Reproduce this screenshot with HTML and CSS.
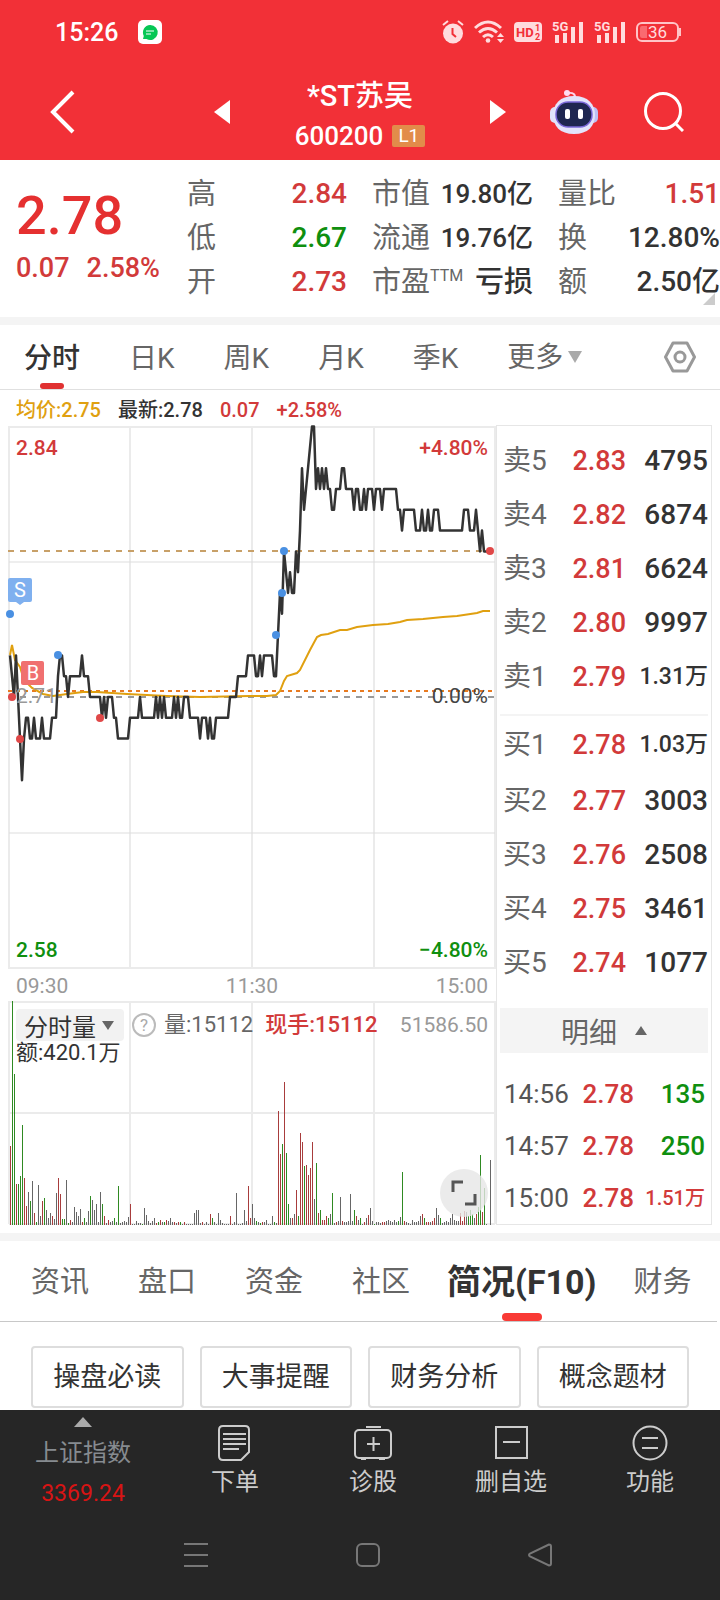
FILE: index.html
```html
<!DOCTYPE html>
<html lang="zh-CN">
<head>
    <meta charset="UTF-8">
    <meta name="viewport" content="width=device-width, initial-scale=1.0">
    <title>*ST苏吴 600200</title>
    <link rel="stylesheet" href="styles.css">
</head>
<body>
    <!-- Header -->
    <header class="header">
        <div class="status">
            <span class="status-time">15:26</span>
            <svg width="24" height="24" viewBox="0 0 24 24"><rect width="24" height="24" rx="5" fill="#fff"/><path d="M12 5a7.500 7.500 0 1 1-3.500 14L5 19l.8-3A7.500 7.500 0 0 1 12 5z" fill="#06c755"/><path d="M8 11h8M8 14h5" stroke="#fff" stroke-width="1.200"/></svg>
            <div class="status-icons">
                <svg width="22" height="24" viewBox="0 0 22 24"><circle cx="11" cy="13.500" r="10" fill="#ffdcde"/><path d="M1 5l5-4M21 5l-5-4" stroke="#ffdcde" stroke-width="2"/><path d="M10.500 8v6l3.500 3" fill="none" stroke="#f23037" stroke-width="2"/></svg>
                <svg width="30" height="24" viewBox="0 0 30 24"><g fill="none" stroke="#ffdcde" stroke-width="3"><path d="M1 8q13-12 26 0"/><path d="M5 12.500q9-8 18 0"/><path d="M9 17q5-4.500 10 0"/></g><circle cx="14" cy="20.500" r="2.300" fill="#ffdcde"/><path d="M23 17l3.500-4 3.500 4zM23 19l3.500 4 3.500-4z" fill="#ffdcde"/></svg>
                <svg width="28" height="20" viewBox="0 0 28 20"><rect width="28" height="20" rx="4" fill="#ffdcde"/><g fill="#f23037" font-weight="700"><text x="2" y="15" font-size="13">HD</text><text x="21" y="9" font-size="9">1</text><text x="21" y="18" font-size="9">2</text></g></svg>
                <svg width="32" height="24" viewBox="0 0 32 24" fill="#ffdcde"><text x="0" y="11" font-size="13" font-weight="700">5G</text><path d="M3 15h4v8H3zM11 13h4v10h-4zM19 7h4v16h-4zM27 2h4v21h-4z"/></svg>
                <svg width="32" height="24" viewBox="0 0 32 24" fill="#ffdcde"><text x="0" y="11" font-size="13" font-weight="700">5G</text><path d="M3 15h4v8H3zM11 13h4v10h-4zM19 7h4v16h-4zM27 2h4v21h-4z"/></svg>
                <svg width="45" height="20" viewBox="0 0 45 20"><rect x="1" y="1" width="41" height="18" rx="5" fill="none" stroke="#ffc4c7" stroke-width="2"/><path d="M6 4h5v12H6a2 2 0 0 1-2-2V6a2 2 0 0 1 2-2z" fill="#fa6a70"/><path d="M44 6v8" stroke="#ffc4c7" stroke-width="2"/><text x="12" y="16" font-size="17" fill="#ffdcde">36</text></svg>
            </div>
        </div>
        <div class="title-bar">
            <button class="icon-btn" aria-label="返回"><svg width="28" height="44" viewBox="0 0 28 44"><path d="M24 2L4 22l20 20" fill="none" stroke="#fff" stroke-width="4"/></svg></button>
            <button class="icon-btn prev" aria-label="上一只"><svg width="16" height="24" viewBox="0 0 16 24"><path d="M16 0v24L0 12z" fill="#fff"/></svg></button>
            <div class="title">
                <h1>*ST苏吴</h1>
                <div class="code">600200 <span class="level">L1</span></div>
            </div>
            <button class="icon-btn next" aria-label="下一只"><svg width="16" height="24" viewBox="0 0 16 24"><path d="M0 0v24l16-12z" fill="#fff"/></svg></button>
            <button class="icon-btn" aria-label="智能助手">
                <svg width="48" height="46" viewBox="0 0 48 46">
                    <path d="M18 4q8-1 7 6" fill="none" stroke="#ffd3ea" stroke-width="2"/><circle cx="17" cy="4" r="3" fill="#ffdcf0"/>
                    <rect x="0" y="18" width="10" height="16" rx="5" fill="#dfe2fa"/><rect x="38" y="18" width="10" height="16" rx="5" fill="#bcc0f4"/>
                    <path d="M24 7C38 7 45 15 45 26S38 45 24 45 3 37 3 26 10 7 24 7z" fill="#e3e3fb"/>
                    <rect x="6" y="13" width="36" height="25" rx="12" fill="#1e2650" stroke="#7a68d8" stroke-width="1.500"/>
                    <rect x="15" y="20" width="5" height="10" rx="2" fill="#fff"/><rect x="28" y="20" width="5" height="10" rx="2" fill="#fff"/>
                </svg>
            </button>
            <button class="icon-btn" aria-label="搜索"><svg width="40" height="40" viewBox="0 0 40 40"><g fill="none" stroke="#fff" stroke-width="3"><circle cx="19" cy="19" r="17.500"/><path d="M31 31l8 8"/></g></svg></button>
        </div>
    </header>

    <!-- Quote -->
    <section class="quote">
        <div class="last">
            <div class="last-price">2.78</div>
            <div class="last-change"><span>0.07</span><span>2.58%</span></div>
        </div>
        <dl class="facts">
            <div><dt>高</dt><dd class="up">2.84</dd></div>
            <div><dt>低</dt><dd class="down">2.67</dd></div>
            <div><dt>开</dt><dd class="up">2.73</dd></div>
        </dl>
        <dl class="facts cap">
            <div><dt>市值</dt><dd>19.80亿</dd></div>
            <div><dt>流通</dt><dd>19.76亿</dd></div>
            <div><dt>市盈<sup>TTM</sup></dt><dd class="loss">亏损</dd></div>
        </dl>
        <dl class="facts">
            <div><dt>量比</dt><dd class="up">1.51</dd></div>
            <div><dt>换</dt><dd>12.80%</dd></div>
            <div><dt>额</dt><dd>2.50亿</dd></div>
        </dl>
    </section>

    <!-- Period tabs -->
    <nav class="periods">
        <a href="#" class="active">分时</a>
        <a href="#">日K</a>
        <a href="#">周K</a>
        <a href="#">月K</a>
        <a href="#">季K</a>
        <a href="#" class="more">更多<svg width="16" height="12" viewBox="0 0 16 12"><path d="M1 0h14l-7 12z" fill="#aaa"/></svg></a>
        <button class="icon-btn settings" aria-label="设置"><svg width="32" height="32" viewBox="0 0 32 32"><g fill="none" stroke="#999" stroke-width="3"><path d="M9 2h14l7.500 14L23 30H9L1.500 16z" stroke-linejoin="round"/><circle cx="16" cy="16" r="5"/></g></svg></button>
    </nav>

    <div class="legend">
        <span class="avg">均价:2.75</span>
        <span>最新:2.78</span>
        <span class="up">0.07</span>
        <span class="up">+2.58%</span>
    </div>

    <main class="board">
        <div class="charts">
            <svg class="price-chart" viewBox="0 0 496 544">
                <g class="grid">
                    <path d="M9 2H495V543H9zM130 2V543M252 2V543M374 2V543"/>
                    <path d="M9 137H495M9 408H495" class="thin"/>
                </g>
                <path d="M8 126H486" class="dash tan"/>
                <path d="M8 272H494" class="dash gray"/>
                <path d="M8 266H492" class="dash orange"/>
                <polyline class="avg-line" points="10,230 12,220 15,235 20,242 24,255 32,263 43,269 53,271 67,269 83,267 97,267 127,269 167,271 200,272 250,271 267,271 276,270 280,266 284,256 287,251 297,248 300,245 310,225 317,212 321,210 328,209 340,205 347,205 357,202 373,200 388,199 400,197 407,195 423,194 443,192 457,191 477,188 483,186 490,186"/>
                <polyline class="price-line" id="priceLine"/>
                <g class="buy">
                    <circle cx="12" cy="272" r="4"/><circle cx="20" cy="314" r="4"/><circle cx="100" cy="293" r="4"/><circle cx="490" cy="126" r="4"/>
                </g>
                <g class="sell">
                    <circle cx="10" cy="189" r="4"/><circle cx="58" cy="230" r="4"/><circle cx="276" cy="210" r="4"/><circle cx="282" cy="168" r="4"/><circle cx="284" cy="126" r="4"/>
                </g>
                <path d="M10 153h20q2 0 2 2v20q0 2-2 2h-6l-4 3-4-3h-6q-2 0-2-2v-20q0-2 2-2z" class="tag-s"/>
                <rect x="21" y="236" width="23" height="24" rx="2" class="tag-b"/>
                <text x="20" y="172" class="tag-text">S</text>
                <text x="33" y="255" class="tag-text">B</text>
                <text x="16" y="30" class="up">2.84</text>
                <text x="488" y="30" class="up end">+4.80%</text>
                <text x="16" y="278" class="base">2.71</text>
                <text x="488" y="278" class="zero end">0.00%</text>
                <text x="16" y="532" class="down">2.58</text>
                <text x="488" y="532" class="down end">−4.80%</text>
            </svg>
            <div class="axis"><span>09:30</span><span>11:30</span><span>15:00</span></div>
            <div class="volume">
                <svg class="volume-chart" viewBox="0 0 496 224">
                    <path d="M9 0V223M130 0V223M252 0V223M374 0V223M495 0V223M9 1H495M9 112H495M9 223H495" class="grid"/>
                    <g id="volumeBars"></g>
                </svg>
                <div class="volume-info">
                    <button class="indicator">分时量<svg width="12" height="9" viewBox="0 0 12 9"><path d="M0 0h12L6 9z" fill="#666"/></svg></button>
                    <button class="icon-btn help" aria-label="帮助">?</button>
                    <span>量:15112</span>
                    <span class="up hand">现手:15112</span>
                    <span class="peak">51586.50</span>
                </div>
                <div class="amount">额:420.1万</div>
                <button class="icon-btn expand" aria-label="全屏"><svg width="26" height="26" viewBox="0 0 26 26"><path d="M2 12V2h10M24 14v10H14" fill="none" stroke="#555" stroke-width="3"/></svg></button>
            </div>
        </div>

        <!-- Order book -->
        <aside class="book">
            <table class="orders asks">
                <tr><th>卖5</th><td class="up">2.83</td><td>4795</td></tr>
                <tr><th>卖4</th><td class="up">2.82</td><td>6874</td></tr>
                <tr><th>卖3</th><td class="up">2.81</td><td>6624</td></tr>
                <tr><th>卖2</th><td class="up">2.80</td><td>9997</td></tr>
                <tr><th>卖1</th><td class="up">2.79</td><td class="wan">1.31万</td></tr>
            </table>
            <table class="orders bids">
                <tr><th>买1</th><td class="up">2.78</td><td class="wan">1.03万</td></tr>
                <tr><th>买2</th><td class="up">2.77</td><td>3003</td></tr>
                <tr><th>买3</th><td class="up">2.76</td><td>2508</td></tr>
                <tr><th>买4</th><td class="up">2.75</td><td>3461</td></tr>
                <tr><th>买5</th><td class="up">2.74</td><td>1077</td></tr>
            </table>
            <button class="detail">明细<svg width="12" height="9" viewBox="0 0 12 9"><path d="M0 9h12L6 0z" fill="#666"/></svg></button>
            <table class="ticks">
                <tr><th>14:56</th><td class="up">2.78</td><td class="down">135</td></tr>
                <tr><th>14:57</th><td class="up">2.78</td><td class="down">250</td></tr>
                <tr><th>15:00</th><td class="up">2.78</td><td class="up wan">1.51万</td></tr>
            </table>
        </aside>
    </main>

    <!-- Info tabs -->
    <nav class="info-tabs">
        <a href="#">资讯</a>
        <a href="#">盘口</a>
        <a href="#">资金</a>
        <a href="#">社区</a>
        <a href="#" class="active">简况(F10)</a>
        <a href="#">财务</a>
    </nav>
    <div class="shortcuts">
        <button>操盘必读</button>
        <button>大事提醒</button>
        <button>财务分析</button>
        <button>概念题材</button>
    </div>

    <!-- Bottom bar -->
    <footer class="footer">
        <div class="tools">
            <a href="#" class="index">
                <svg width="18" height="10" viewBox="0 0 18 10"><path d="M0 10h18L9 0z" fill="#aaa"/></svg>
                <span>上证指数</span>
                <span class="index-value">3369.24</span>
            </a>
            <a href="#" class="tool">
                <svg width="36" height="38" viewBox="0 0 36 38"><path d="M6 2h22q4 0 4 4v22l-8 8H6q-4 0-4-4V6q0-4 4-4zM6 10h23M6 15h23M6 20h23M6 25h16"/></svg>
                下单
            </a>
            <a href="#" class="tool">
                <svg width="38" height="38" viewBox="0 0 38 38"><rect x="1" y="6" width="36" height="28" rx="4"/><path d="M12 3h15M7 35h5M25 35h6M13 20h13M19.500 13v14"/></svg>
                诊股
            </a>
            <a href="#" class="tool">
                <svg width="34" height="38" viewBox="0 0 34 38"><rect x="2" y="3" width="31" height="31"/><path d="M9 18h17"/></svg>
                删自选
            </a>
            <a href="#" class="tool">
                <svg width="36" height="38" viewBox="0 0 36 38"><circle cx="18" cy="19" r="16.500"/><path d="M10 14h16M10 24h16"/></svg>
                功能
            </a>
        </div>
        <div class="system">
            <button class="icon-btn" aria-label="菜单"><svg width="24" height="26" viewBox="0 0 24 26"><path d="M0 2h24M0 13h24M0 24h24"/></svg></button>
            <button class="icon-btn" aria-label="主屏幕"><svg width="24" height="26" viewBox="0 0 24 26"><rect x="1" y="2" width="22" height="22" rx="5"/></svg></button>
            <button class="icon-btn" aria-label="后退"><svg width="24" height="26" viewBox="0 0 24 26"><path d="M21 2.500L2 11.500q-2 1.500 0 3L21 23.500q2 0 2-2v-17q0-2-2-2z"/></svg></button>
        </div>
    </footer>

    <script src="chart.js"></script>
</body>
</html>
```
FILE: styles.css
```css
* {
    box-sizing: border-box;
}
body {
    margin: 0;
    background: #fff;
    color: #333;
    font-family: Roboto, "Noto Sans CJK SC", sans-serif;
    font-size: 28px;
    overflow-x: hidden;
}
a {
    color: inherit;
    text-decoration: none;
}
button {
    font-family: inherit;
    color: inherit;
    border: 0;
    padding: 0;
}
svg {
    display: block;
    flex-shrink: 0;
}
.icon-btn {
    background: none;
}
.up {
    color: #d23a3a;
    fill: #d23a3a;
}
.down {
    color: #0f8f0f;
    fill: #0f8f0f;
}

/* Header */
.header {
    background: #f23037;
    color: #fff;
    height: 160px;
}
.status {
    height: 64px;
    display: flex;
    align-items: center;
    gap: 20px;
    padding: 0 39px 0 55px;
}
.status-time {
    font-size: 25px;
    font-weight: 500;
}
.status-icons {
    margin-left: auto;
    display: flex;
    align-items: center;
    gap: 10px;
}
.title-bar {
    height: 96px;
    display: grid;
    grid-template-columns: 74fr 130fr 260fr 40fr 88fr 92fr;
    align-items: center;
    justify-items: center;
    padding: 0 10px 0 26px;
}
.title-bar .icon-btn {
    display: flex;
}
.title-bar .prev {
    justify-self: end;
}
.title-bar .next {
    justify-self: start;
}
.title {
    text-align: center;
    padding-top: 8px;
}
.title h1 {
    margin: 0;
    font-size: 29px;
    font-weight: 500;
    line-height: 40px;
}
.code {
    display: flex;
    justify-content: center;
    align-items: center;
    gap: 9px;
    font-size: 26px;
    font-weight: 500;
    line-height: 40px;
}
.level {
    background: #e28c4a;
    border-radius: 2px;
    font-size: 19px;
    font-weight: 400;
    line-height: 22px;
    padding: 0 6px;
}

/* Quote */
.quote {
    position: relative;
    height: 165px;
    display: grid;
    grid-template-columns: 146fr 160fr 161fr 162fr;
    gap: 25px;
    padding: 12px 0 0 16px;
    border-bottom: 8px solid #f4f4f4;
}
.quote::after {
    content: "";
    position: absolute;
    right: 5px;
    bottom: 12px;
    border: 6px solid transparent;
    border-right-color: #ccc;
    border-bottom-color: #ccc;
}
.last-price {
    color: #e53030;
    font-size: 54px;
    font-weight: 500;
    line-height: 64px;
    padding-top: 12px;
}
.last-change {
    display: flex;
    gap: 17px;
    color: #d23a3a;
    font-size: 27px;
    font-weight: 500;
    line-height: 40px;
}
.facts {
    margin: 0;
    white-space: nowrap;
}
.facts div {
    display: flex;
    justify-content: space-between;
    line-height: 44px;
    height: 44px;
}
.facts dt {
    color: #666;
    font-size: 29px;
}
.facts dd {
    margin: 0;
    font-weight: 500;
}
.facts sup {
    font-size: 16px;
    line-height: 0;
}
.cap dd {
    font-size: 26px;
}
.cap .loss {
    font-size: 29px;
}

/* Period tabs */
.periods {
    height: 65px;
    display: flex;
    align-items: center;
    gap: 49px;
    padding: 0 24px;
    border-bottom: 1px solid #e0e0e0;
    color: #666;
    font-size: 28px;
}
.periods a {
    height: 64px;
    line-height: 67px;
    white-space: nowrap;
}
.periods .active {
    color: #333;
    font-weight: 500;
    position: relative;
}
.periods .active::after {
    content: "";
    position: absolute;
    left: 50%;
    bottom: 0;
    width: 24px;
    height: 6px;
    margin-left: -12px;
    border-radius: 3px;
    background: #e03131;
}
.more {
    display: flex;
    align-items: center;
    gap: 4px;
}
.settings {
    margin-left: auto;
}
.legend {
    height: 35px;
    display: flex;
    gap: 17px;
    padding: 0 16px;
    font-size: 20px;
    font-weight: 500;
    line-height: 40px;
}
.avg {
    color: #e0a010;
}

/* Charts */
.board {
    display: grid;
    grid-template-columns: minmax(0, 1fr) 216px;
    padding-right: 8px;
    padding-bottom: 8px;
    border-bottom: 8px solid #f4f4f4;
}
.price-chart {
    width: 100%;
    font-size: 21px;
    font-weight: 500;
}
.grid {
    fill: none;
    stroke: #ebebeb;
    stroke-width: 2;
}
.thin {
    stroke-width: 1;
    stroke: #ddd;
}
.dash {
    stroke-width: 2;
    stroke-dasharray: 6 6;
}
.tan {
    stroke: #c8a068;
}
.gray {
    stroke: #999;
}
.orange {
    stroke: #e87a20;
    stroke-dasharray: 4 4;
}
.avg-line {
    fill: none;
    stroke: #e0a010;
    stroke-width: 2;
}
.price-line {
    fill: none;
    stroke: #333;
    stroke-width: 2.5;
    stroke-linejoin: round;
}
.buy {
    fill: #e04848;
}
.sell {
    fill: #4a90e2;
}
.tag-s {
    fill: #7fb0ef;
}
.tag-b {
    fill: #f07070;
}
.tag-text {
    fill: #fff;
    font-size: 20px;
    font-weight: 400;
    text-anchor: middle;
}
.end {
    text-anchor: end;
}
.base {
    fill: #999;
    font-weight: 400;
}
.zero {
    fill: #444;
    font-weight: 400;
}
.axis {
    display: flex;
    justify-content: space-between;
    height: 32px;
    padding: 0 8px 0 16px;
    color: #999;
    font-size: 21px;
    line-height: 34px;
}
.volume {
    position: relative;
}
.volume-chart {
    width: 100%;
}
.bar-r {
    fill: #a83c3c;
}
.bar-g {
    fill: #2f8a22;
}
.bar-k {
    fill: #666;
}
.volume-info {
    position: absolute;
    top: 8px;
    left: 16px;
    right: 8px;
    display: flex;
    align-items: center;
    gap: 8px;
    color: #666;
    font-size: 22px;
    line-height: 32px;
    white-space: nowrap;
}
.indicator {
    display: flex;
    align-items: center;
    gap: 6px;
    width: 108px;
    height: 32px;
    padding: 0 8px;
    border-radius: 4px;
    background: #f2f2f2;
    color: #333;
    font-size: 24px;
}
.help {
    flex-shrink: 0;
    width: 24px;
    height: 24px;
    border: 2px solid #bbb;
    border-radius: 50%;
    color: #aaa;
    font-size: 17px;
    line-height: 20px;
}
.hand {
    font-weight: 500;
    margin-left: 4px;
}
.peak {
    margin-left: auto;
    color: #999;
    font-size: 21px;
}
.amount {
    position: absolute;
    top: 38px;
    left: 16px;
    font-size: 22px;
    line-height: 28px;
}
.expand {
    position: absolute;
    right: 8px;
    bottom: 8px;
    width: 48px;
    height: 48px;
    display: flex;
    align-items: center;
    justify-content: center;
    border-radius: 50%;
    background: rgba(230, 230, 230, 0.8);
}

/* Order book */
.book {
    border: 1px solid #e6e6e6;
    padding: 8px 3px 0;
}
.book table {
    width: 100%;
    border-collapse: collapse;
    table-layout: fixed;
}
.book th,
.book td {
    padding: 0;
    white-space: nowrap;
}
.book th {
    width: 66px;
    padding-left: 3px;
    text-align: left;
    font-weight: 400;
    color: #666;
}
.book td {
    text-align: right;
    font-weight: 500;
}
.book td:nth-child(2) {
    width: 60px;
    font-size: 27px;
}
.orders {
    font-size: 28px;
}
.orders tr {
    height: 54px;
    line-height: 54px;
}
.asks {
    margin-bottom: 10px;
}
.bids {
    border-top: 2px solid #f4f4f4;
}
.orders.bids tr:first-child {
    height: 58px;
    line-height: 58px;
}
.book .wan {
    font-size: 23px;
}
.detail {
    width: 100%;
    height: 45px;
    margin: 18px 0 15px;
    display: flex;
    align-items: center;
    justify-content: center;
    gap: 18px;
    background: #f4f4f4;
    color: #666;
    font-size: 28px;
}
.ticks {
    font-size: 26px;
}
.ticks tr {
    height: 52px;
    line-height: 52px;
}
.book .ticks th {
    width: 72px;
    padding-left: 4px;
    color: #555;
}
.book .ticks td:nth-child(2) {
    width: 62px;
    font-size: 26px;
}
.book .ticks td:last-child {
    padding-right: 3px;
}
.book .ticks .wan {
    font-size: 20px;
}

/* Info tabs */
.info-tabs {
    height: 81px;
    display: flex;
    gap: 49px;
    margin-right: 3px;
    padding-left: 31px;
    border-bottom: 1px solid #c8c8c8;
    color: #666;
    font-size: 29px;
    line-height: 82px;
    white-space: nowrap;
}
.info-tabs a {
    height: 80px;
}
.info-tabs .active {
    position: relative;
    margin: 0 -12px;
    color: #333;
    font-size: 34px;
    font-weight: 700;
}
.info-tabs .active::after {
    content: "";
    position: absolute;
    left: 50%;
    bottom: 0;
    width: 40px;
    height: 8px;
    margin-left: -20px;
    border-radius: 4px;
    background: #f93a35;
}
.shortcuts {
    display: grid;
    grid-template-columns: repeat(4, 1fr);
    gap: 16px;
    padding: 24px 31px 2px;
}
.shortcuts button {
    height: 62px;
    padding-bottom: 5px;
    border: 2px solid #ddd;
    border-radius: 4px;
    background: #fff;
    font-size: 27px;
}

/* Bottom bar */
.footer {
    background: #262626;
    color: #ccc;
}
.tools {
    height: 100px;
    display: grid;
    grid-template-columns: 166fr 138fr 138fr 138fr 140fr;
    font-size: 24px;
}
.index {
    display: flex;
    flex-direction: column;
    align-items: center;
    padding-top: 7px;
    color: #868b90;
    line-height: 42px;
}
.index span:first-of-type {
    padding-top: 5px;
}
.index-value {
    color: #d81414;
    font-size: 23px;
    line-height: 40px;
}
.tool {
    display: flex;
    flex-direction: column;
    align-items: center;
    padding-top: 14px;
    line-height: 40px;
}
.tool svg,
.system svg {
    fill: none;
    stroke: #ccc;
    stroke-width: 2;
}
.system {
    height: 90px;
    display: flex;
    align-items: center;
    justify-content: center;
    gap: 148px;
    padding-left: 16px;
}
.system svg {
    stroke: #777;
}
```
FILE: chart.js
```js
// price in cents above 2.00, one entry per change: minute:price
const prices = "0:73 2:71 3:73 4:71 5:69 6:67 7:69 8:70 9:70 10:69 11:69 12:70 13:69 15:69 16:70 17:69 20:69 21:70 23:70 24:72 25:73 26:73 27:72 28:72 29:71 30:72 35:72 36:73 37:72 39:72 40:71 45:71 46:70 47:71 48:70 49:71 51:71 52:70 53:70 54:69 59:69 60:70 64:70 65:71 66:70 72:70 73:71 74:70 75:71 76:70 77:71 78:70 81:70 82:71 83:70 84:71 85:70 86:70 87:71 89:71 90:70 94:70 95:69 96:70 98:70 99:69 100:70 101:69 102:69 103:70 109:70 110:71 113:71 114:72 118:72 119:73 122:73 123:72 124:72 125:73 126:72 127:73 131:73 132:72 133:72 134:74 135:76 136:75 137:78 138:77 139:76 140:77 141:76 142:76 143:78 144:77 145:79 146:82 147:80 148:81 151:84 152:84 153:81 154:82 155:81 156:82 157:81 158:82 159:81 160:81 161:80 162:80 163:81 165:81 166:82 167:82 168:81 171:81 172:80 173:81 174:81 175:80 176:80 177:81 178:80 179:81 181:81 182:80 183:81 185:81 186:80 187:81 193:81 194:80 195:80 196:79 197:80 202:80 203:79 205:79 206:80 207:79 208:79 209:80 210:79 211:79 212:80 214:80 215:79 226:79 227:80 229:80 230:79 232:79 233:80 234:79 235:78 236:79 237:78 240:78";

const points = prices.split(" ").map(item => {
    const [minute, cents] = item.split(":").map(Number);
    return (10 + minute * 2) + "," + (272 - (cents - 71) * 20.8).toFixed(1);
});
document.getElementById("priceLine").setAttribute("points", points.join(" "));

// one bar per minute: colour + height
const volumes = "r79 g224 g151 r41 g41 g49 g100 r47 r19 k33 g24 k44 r12 g3 k40 k9 r24 g27 k15 k7 k12 r9 k6 k32 r47 r31 g6 g6 k45 g2 r5 k3 k18 k13 k9 k16 r3 g7 k3 k14 g29 k25 k15 k21 k3 k33 g21 r9 k2 r5 k3 k4 g7 k3 g39 k2 k3 k4 k3 k8 r21 k1 k1 k4 k2 k2 g1 k17 k10 k4 k2 k4 k7 r2 g3 r5 k3 g3 r5 k4 k7 k3 r3 k2 r3 g3 k1 r3 k1 k1 k1 k1 k12 k15 k15 k2 r3 k1 k3 k1 r11 g7 k3 k1 k12 k5 k2 k1 k1 k1 r9 k1 k3 k32 k1 k1 k2 k15 k4 r39 r7 k21 k7 g4 k3 g2 r3 k3 k5 k1 k1 k9 g3 k2 r114 r71 g81 r143 g72 g21 k7 r7 k11 r35 g9 r92 r83 g59 r60 r50 r57 r83 k26 g62 r12 g15 r5 r5 r9 g7 k11 g32 k2 r3 k4 k28 r4 k3 k3 k4 k31 k4 g15 r9 k5 g7 k1 r3 k7 r10 k17 k4 g1 k3 k3 k2 r3 r3 k4 k5 k4 k3 k5 k3 g4 k8 g53 r4 k3 k2 k1 k5 k3 k3 k4 k9 r11 g7 r3 r3 k3 r4 r7 k17 k10 g7 k2 k3 k4 k3 k7 k11 k5 k4 k4 r12 r4 r14 k13 g9 g15 g11 k7 r11 g18 g70 r13 g37 k1 k0 k65";

const bars = document.getElementById("volumeBars");
volumes.split(" ").forEach((item, minute) => {
    const height = Number(item.slice(1));
    const bar = document.createElementNS("http://www.w3.org/2000/svg", "rect");
    bar.setAttribute("class", "bar-" + item[0]);
    bar.setAttribute("x", 10 + minute * 2);
    bar.setAttribute("y", 224 - height);
    bar.setAttribute("width", 1);
    bar.setAttribute("height", height);
    bars.appendChild(bar);
});
```
